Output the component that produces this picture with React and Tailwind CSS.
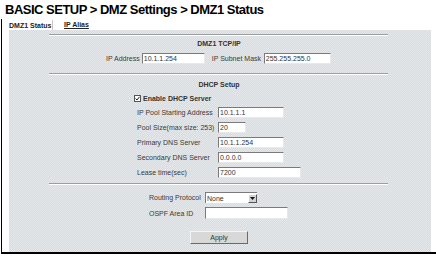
import React from 'react'

const font = { fontFamily: '"Liberation Sans", Arial, sans-serif' }

const Field = ({ value, w }) => (
  <div
    className={`h-[11px] ${w} bg-white border-t border-l border-t-[#7a7a7a] border-l-[#7a7a7a] border-b border-r border-b-[#e8e8e8] border-r-[#e8e8e8] pl-[1px] text-[7px] leading-[9px] text-[#333] overflow-hidden whitespace-nowrap`}
  >
    {value}
  </div>
)

const Separator = ({ className = '' }) => (
  <div className={`ml-[40px] w-[339px] border-t border-t-[#9c9fa1] border-b border-b-white ${className}`} />
)

const Row = ({ label, children, className = '' }) => (
  <div className={`flex items-center h-[11px] ml-[128px] ${className}`}>
    <span className="w-[81px] text-[7px] leading-[9px] text-[#3a3a3a] whitespace-nowrap">{label}</span>
    {children}
  </div>
)

export default function App() {
  return (
    <div className="w-[436px] h-[257px] bg-white overflow-hidden" style={font}>
      <h1 className="pl-[5px] pt-[2px] h-[19px] text-[13px] leading-[16px] font-bold tracking-[-0.5px] text-black whitespace-nowrap">
        BASIC SETUP &gt; DMZ Settings &gt; DMZ1 Status
      </h1>

      <div className="ml-[1px] h-[235px] border-l border-b-2 border-black">
        {/* tabs */}
        <div className="flex h-[11px] items-end pl-[7px]">
          <span className="text-[7px] leading-[9px] font-bold text-[#222] w-[43px] whitespace-nowrap">DMZ1 Status</span>
          <div className="h-[10px] w-[46px] bg-white border-l border-[#c8c8c8] pl-[11px] text-[7px] leading-[9px] font-bold text-[#222] whitespace-nowrap">
            <span className="underline">IP Alias</span>
          </div>
        </div>

        {/* panel */}
        <div className="ml-[7px] w-[422px] h-[222px] bg-[#dee2e4] bg-[repeating-conic-gradient(#e6e9eb_0%_25%,#d7dbde_0%_50%)] bg-size-[2px_2px] pt-[4px]">
          <Separator />
          <div className="mt-[3px] h-[10px] text-center text-[7px] leading-[10px] font-bold text-[#333] pr-[2px]">DMZ1 TCP/IP</div>

          <div className="mt-[4px] flex items-center h-[11px] ml-[97px]">
            <span className="text-[7px] leading-[9px] text-[#3a3a3a] mr-[2px]">IP Address</span>
            <Field value="10.1.1.254" w="w-[63px]" />
            <span className="ml-[7px] w-[52px] text-[7px] leading-[9px] text-[#3a3a3a] whitespace-nowrap">IP Subnet Mask</span>
            <Field value="255.255.255.0" w="w-[67px]" />
          </div>

          <Separator className="mt-[9px]" />
          <div className="mt-[5px] h-[10px] text-center text-[7px] leading-[10px] font-bold text-[#333] pr-[2px]">DHCP Setup</div>

          <div className="mt-[3px] h-[10px] flex items-center ml-[125px]">
            <div className="w-[7px] h-[7px] bg-white border border-[#555] flex items-center justify-center mr-[2px]">
              <svg width="5" height="5" viewBox="0 0 5 5">
                <path d="M0.5 2.5 L2 4 L4.5 0.8" stroke="#222" strokeWidth="1" fill="none" />
              </svg>
            </div>
            <span className="text-[7px] leading-[9px] font-bold text-[#333]">Enable DHCP Server</span>
          </div>

          <Row label="IP Pool Starting Address" className="mt-[4px]">
            <Field value="10.1.1.1" w="w-[66px]" />
          </Row>
          <Row label="Pool Size(max size: 253)" className="mt-[4px]">
            <Field value="20" w="w-[28px]" />
          </Row>
          <Row label="Primary DNS Server" className="mt-[4px]">
            <Field value="10.1.1.254" w="w-[66px]" />
          </Row>
          <Row label="Secondary DNS Server" className="mt-[4px]">
            <Field value="0.0.0.0" w="w-[66px]" />
          </Row>
          <Row label="Lease time(sec)" className="mt-[4px]">
            <Field value="7200" w="w-[83px]" />
          </Row>

          <Separator className="mt-[5px]" />

          <div className="mt-[7px] flex items-center h-[11px] ml-[140px]">
            <span className="w-[56px] text-[7px] leading-[9px] text-[#3a3a3a] whitespace-nowrap">Routing Protocol</span>
            <div className="h-[11px] w-[52px] bg-white border-t border-l border-[#7a7a7a] flex items-center justify-between">
              <span className="pl-[1px] text-[7px] leading-[9px] text-[#333]">None</span>
              <div className="h-[9px] w-[9px] bg-[#d4d4d4] border border-t-white border-l-white border-b-[#555] border-r-[#555] flex items-center justify-center">
                <svg width="5" height="3" viewBox="0 0 5 3">
                  <path d="M0 0 H5 L2.5 3 Z" fill="#111" />
                </svg>
              </div>
            </div>
          </div>
          <div className="mt-[4px] flex items-center h-[12px] ml-[140px]">
            <span className="w-[56px] text-[7px] leading-[9px] text-[#3a3a3a] whitespace-nowrap">OSPF Area ID</span>
            <Field value="" w="w-[83px] h-[12px]" />
          </div>

          <div className="mt-[12px] ml-[181px] w-[58px] h-[13px] bg-[#d8d8d8] border border-t-[#f4f4f4] border-l-[#f4f4f4] border-b-[#6a6a6a] border-r-[#6a6a6a] flex items-center justify-center text-[7px] leading-[9px] text-[#333]">
            Apply
          </div>
        </div>
      </div>
    </div>
  )
}
